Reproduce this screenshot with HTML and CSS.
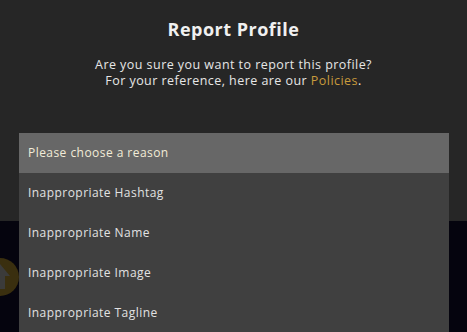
FILE: index.html
```html
<!DOCTYPE html>
<html lang="en">
	<head>
		<meta charset="UTF-8" />
		<meta name="viewport" content="width=device-width, initial-scale=1.0" />
		<title>Report Profile</title>
		<link rel="stylesheet" href="styles.css">
	</head>

	<body>
		<div class="scene">
			<!-- Background behind the modal -->
			<div class="backdrop">
				<div class="avatar">
					<svg width="40" height="40" viewBox="0 0 40 40">
						<circle cx="20" cy="20" r="19" fill="#3a2f0f" />
						<path d="M20 7 L30 19 L25 19 L25 32 L15 32 L15 19 L10 19 Z" fill="#3b3b3a" />
					</svg>
				</div>
			</div>

			<div class="modal">
				<h1 class="title">Report Profile</h1>
				<p class="message">
					Are you sure you want to report this profile?<br />
					For your reference, here are our <a href="#" class="link">Policies</a>.
				</p>
			</div>

			<!-- Reason dropdown -->
			<ul class="dropdown">
				<li class="option selected">Please choose a reason</li>
				<li class="option">Inappropriate Hashtag</li>
				<li class="option">Inappropriate Name</li>
				<li class="option">Inappropriate Image</li>
				<li class="option">Inappropriate Tagline</li>
			</ul>
		</div>
	</body>
</html>
```

FILE: styles.css
```css
body {
	margin: 0;
	font-family: "Open Sans", sans-serif;
	background-color: #05040e;
	color: #e8e8e8;
	overflow: hidden;
}

.scene {
	position: relative;
	height: 332px;
}

.modal {
	height: 221px;
	background-color: #262626;
	text-align: center;
	padding-top: 17px;
	box-sizing: border-box;
}

.title {
	margin: 0;
	font-size: 18px;
	font-weight: 700;
	letter-spacing: 0.5px;
	color: #f0f0f0;
	line-height: 24px;
}

.message {
	margin: 16px 0 0;
	font-size: 12.5px;
	letter-spacing: 0.45px;
	line-height: 16px;
	color: #e6e6e6;
}

.link {
	color: #c89b3c;
	text-decoration: none;
}

.backdrop {
	position: absolute;
	top: 221px;
	left: 0;
	right: 0;
	bottom: 0;
	background-color: #05040e;
}

.avatar {
	position: absolute;
	top: 36px;
	left: -20px;
}

.dropdown {
	position: absolute;
	top: 133px;
	left: 19px;
	width: 430px;
	margin: 0;
	padding: 0;
	list-style: none;
	background-color: #404040;
}

.option {
	height: 40px;
	line-height: 40px;
	padding-left: 9px;
	font-size: 12px;
	letter-spacing: 0.45px;
	color: #e2e2e2;
}

.option.selected {
	background-color: #676767;
	color: #f2ecd8;
}
```
